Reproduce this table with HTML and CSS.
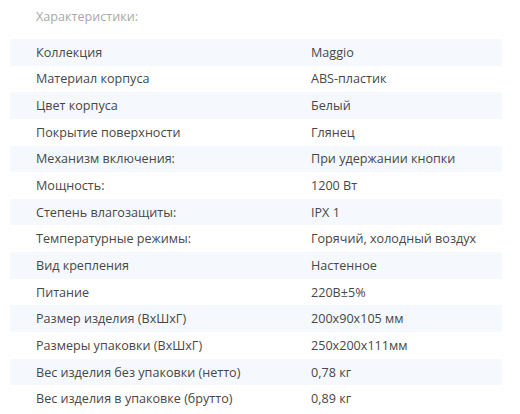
FILE: index.html
```html
<!doctype html>
<html lang="ru">
    <head>
        <meta charset="utf-8" />
        <title>Характеристики</title>
        <link rel="stylesheet" href="styles.css">
    </head>
    <body>
        <div class="specs">
            <div class="specs__title">Характеристики:</div>
            <div class="specs__table">
                <div class="specs__row"><span class="specs__name">Коллекция</span><span class="specs__value">Maggio</span></div>
                <div class="specs__row"><span class="specs__name">Материал корпуса</span><span class="specs__value">ABS-пластик</span></div>
                <div class="specs__row"><span class="specs__name">Цвет корпуса</span><span class="specs__value">Белый</span></div>
                <div class="specs__row"><span class="specs__name">Покрытие поверхности</span><span class="specs__value">Глянец</span></div>
                <div class="specs__row"><span class="specs__name">Механизм включения:</span><span class="specs__value">При удержании кнопки</span></div>
                <div class="specs__row"><span class="specs__name">Мощность:</span><span class="specs__value">1200 Вт</span></div>
                <div class="specs__row"><span class="specs__name">Степень влагозащиты:</span><span class="specs__value">IPX 1</span></div>
                <div class="specs__row"><span class="specs__name">Температурные режимы:</span><span class="specs__value">Горячий, холодный воздух</span></div>
                <div class="specs__row"><span class="specs__name">Вид крепления</span><span class="specs__value">Настенное</span></div>
                <div class="specs__row"><span class="specs__name">Питание</span><span class="specs__value">220В±5%</span></div>
                <div class="specs__row"><span class="specs__name">Размер изделия (ВxШxГ)</span><span class="specs__value">200x90x105 мм</span></div>
                <div class="specs__row"><span class="specs__name">Размеры упаковки (ВxШxГ)</span><span class="specs__value">250x200x111мм</span></div>
                <div class="specs__row"><span class="specs__name">Вес изделия без упаковки (нетто)</span><span class="specs__value">0,78 кг</span></div>
                <div class="specs__row"><span class="specs__name">Вес изделия в упаковке (брутто)</span><span class="specs__value">0,89 кг</span></div>
            </div>
        </div>
    </body>
</html>
```

FILE: styles.css
```css
body {
    margin: 0;
    background: #fff;
    font-family: 'Open Sans', sans-serif;
    font-size: 12.6px;
    color: #474747;
}

.specs {
    padding: 0 18px 0 10px;
}

.specs__title {
    height: 39px;
    display: flex;
    align-items: center;
    padding: 0 0 6px 26px;
    box-sizing: border-box;
    color: #a8a8a8;
}

.specs__row {
    display: flex;
    align-items: center;
    height: 26.65px;
}

.specs__row:nth-child(odd) {
    background: #f5f9fd;
}

.specs__name {
    width: 275px;
    padding-left: 26px;
}
```
